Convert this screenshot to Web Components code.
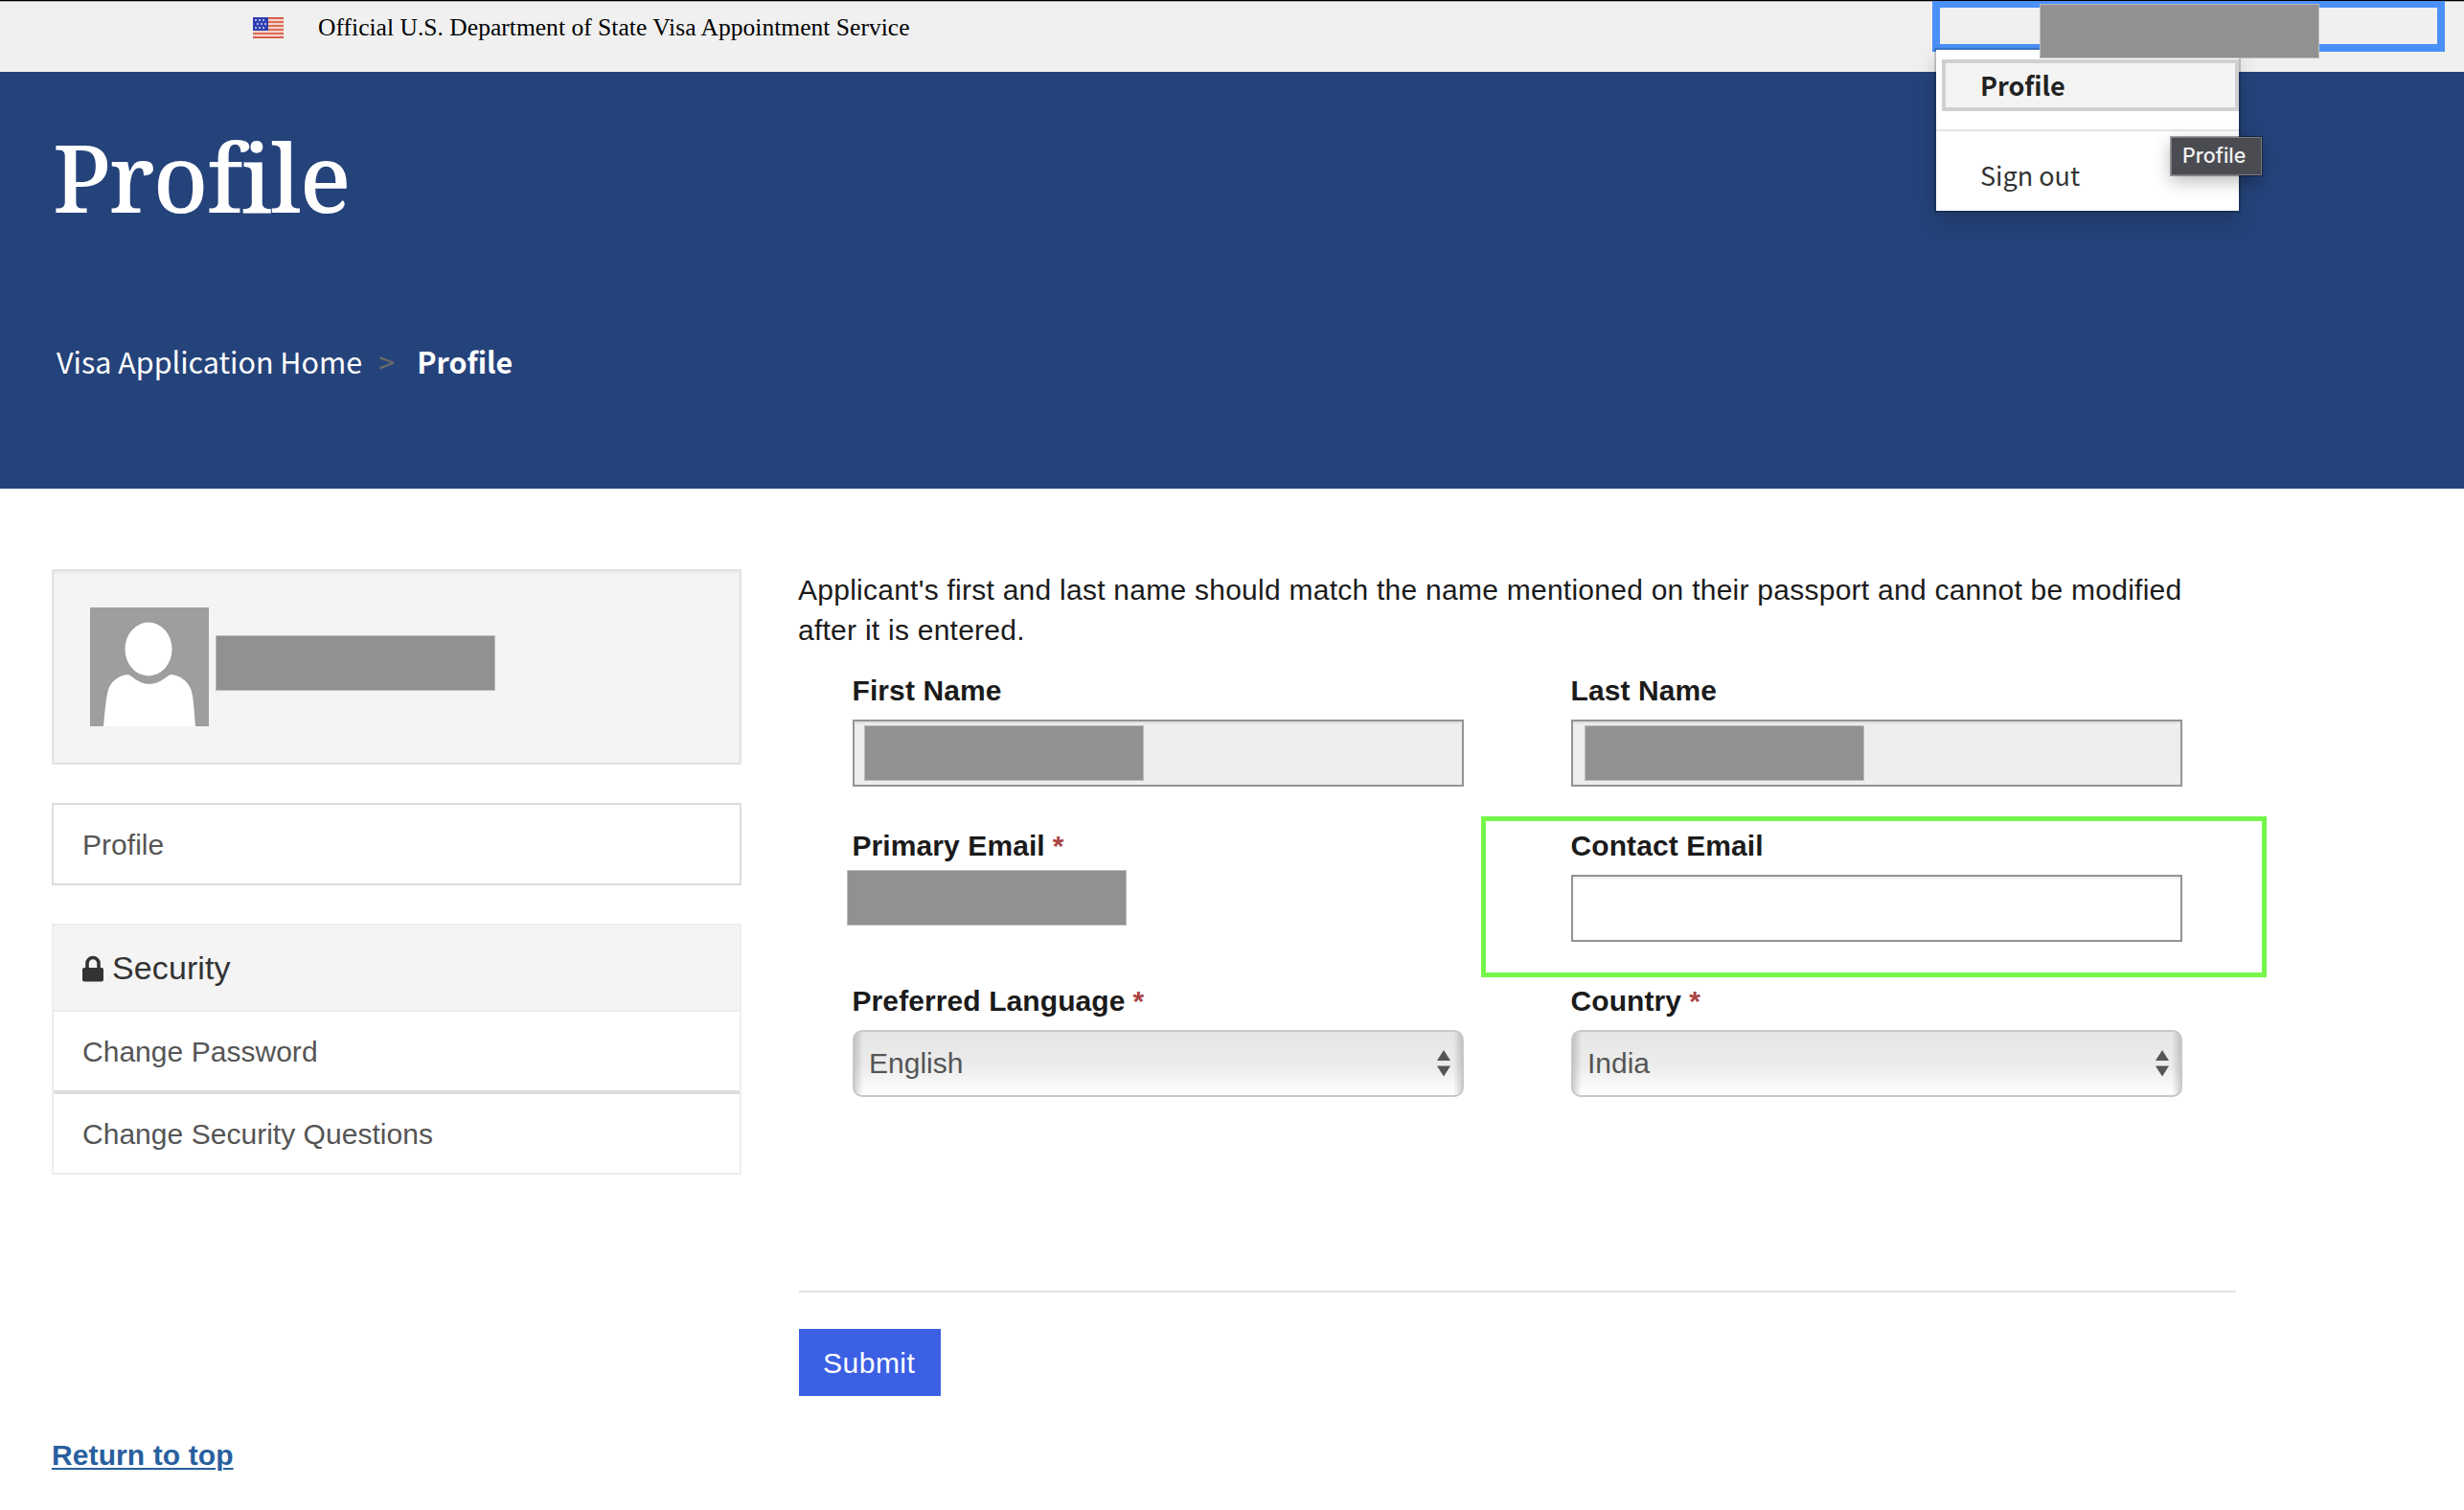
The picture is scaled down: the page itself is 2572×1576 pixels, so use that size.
<!DOCTYPE html>
<html lang="en">
<head>
<meta charset="utf-8">
<title>Profile</title>
<style>
html, body { margin: 0; padding: 0; background: #fff; }
body { width: 2572px; height: 1576px; overflow: hidden; font-family: "Liberation Sans", Arial, sans-serif; font-size: 30px; line-height: 42px; color: #1b1b1b; }
</style>
</head>
<body>
<profile-page></profile-page>
<script>
function define(name, html) {
  const tpl = document.createElement('template');
  tpl.innerHTML = html;
  customElements.define(name, class extends HTMLElement {
    constructor() {
      super();
      this.attachShadow({ mode: 'open' }).appendChild(tpl.content.cloneNode(true));
    }
  });
}

define('redacted-block', `
<style>:host{display:block;box-sizing:border-box;width:291.500px;height:58px;flex:none;background:#919191;border:1px solid #bcbcbc}</style>`);

define('us-flag', `
<style>:host{display:block;width:32px;height:22px;flex:none} svg{display:block}</style>
<svg width="32" height="22" viewBox="0 0 32 22" shape-rendering="crispEdges">
<rect width="32" height="22" fill="#f6d3cc"/>
<g fill="#da6f5a"><rect width="32" height="2" fill="#da6f5a"/><rect width="32" height="1" fill="#cf5238"/><rect y="4" width="32" height="2"/><rect y="8" width="32" height="2"/><rect y="12" width="32" height="2"/><rect y="16" width="32" height="2"/><rect y="20" width="32" height="2"/><rect y="21" width="32" height="1" fill="#cf5238"/></g>
<rect width="16" height="14" fill="#2f3fb0"/>
<g fill="#a9b0e6"><rect x="2" y="2" width="2" height="2"/><rect x="6" y="2" width="2" height="2"/><rect x="10" y="2" width="2" height="2"/>
<rect x="4" y="6" width="2" height="2"/><rect x="8" y="6" width="2" height="2"/><rect x="12" y="6" width="2" height="2"/>
<rect x="2" y="10" width="2" height="2"/><rect x="6" y="10" width="2" height="2"/><rect x="10" y="10" width="2" height="2"/></g>
</svg>`);

define('menu-item', `
<style>
:host{display:block;box-sizing:border-box;height:54px;margin-left:6px;border:4px solid transparent;padding-left:36px;font:27px/46px "Noto Sans CJK JP",sans-serif;color:#333}
:host([active]){background:#f4f4f4;border-color:#d0d0d0;font-weight:700;color:#222}
</style><slot></slot>`);

define('tool-tip', `
<style>:host{display:block;box-sizing:border-box;width:95px;height:40px;background:#4b4c51;border:1px solid #7b7c80;outline:1px solid rgba(0,0,0,.35);box-shadow:0 6px 18px rgba(0,0,0,.28);color:#f2f2f2;font:500 21.5px/37px Inter,sans-serif;padding-left:11px}</style><slot></slot>`);

define('user-menu', `
<style>
:host{display:block;position:relative;box-sizing:border-box;width:535px;height:53px;border:8px solid #4a90f7;border-top-width:7px}
.menu{position:absolute;left:-4px;top:44px;width:316px;height:168px;box-sizing:border-box;padding-top:10px;background:#fff;box-shadow:0 0 0 2px rgba(0,0,0,.18),0 12px 24px rgba(0,0,0,.18)}
hr{margin:19px 0 19px;border:0;height:2px;background:#e5e5e5}
redacted-block{position:absolute;left:104px;top:-4px;height:57px;width:292px}
tool-tip{position:absolute;left:241px;top:135px}
</style>
<div class="menu"><menu-item active>Profile</menu-item><hr><menu-item>Sign out</menu-item></div>
<redacted-block></redacted-block>
<tool-tip>Profile</tool-tip>`);

define('top-bar', `
<style>
:host{display:flex;box-sizing:border-box;height:75px;border-top:1px solid #000;background:#f0f0f0;box-shadow:inset 0 1px #a8a8a8;padding:0 20px 0 264px;align-items:flex-start;position:relative;z-index:2}
us-flag{margin-top:17px}
span{margin:13px auto 0 36px;font:25.5px/30px "Liberation Serif","Times New Roman",serif;color:#000;letter-spacing:.03px}
</style>
<us-flag></us-flag><span>Official U.S. Department of State Visa Appointment Service</span><user-menu></user-menu>`);

define('page-banner', `
<style>
:host{display:block;box-sizing:border-box;height:435px;background:#25437b;color:#fff;padding:39px 0 0 55px}
h1{margin:0;font:500 98.5px/140px "Noto Serif",serif;letter-spacing:-1.65px;font-variant-ligatures:none}
nav{display:flex;margin:101px 0 0 4px;font:30.5px/44px "Noto Sans CJK JP",sans-serif}
i{font-style:normal;color:#6b6b66;font-size:30px;width:40px;padding-left:17px}
b{font-weight:700}
</style>
<h1>Profile</h1>
<nav><span>Visa Application Home</span><i>&gt;</i><b>Profile</b></nav>`);

define('user-card', `
<style>
:host{display:flex;box-sizing:border-box;height:204px;padding:38px;background:#f4f4f4;border:2px solid #e3e3e3;box-shadow:inset 0 2px 3px rgba(0,0,0,.06)}
svg{display:block;flex:none}
redacted-block{margin:29px 0 0 7px;width:292px}
</style>
<svg width="124" height="124" viewBox="0 0 124 124"><rect width="124" height="124" fill="#9e9e9e"/>
<ellipse cx="61" cy="43.500" rx="24.500" ry="28" fill="#fff"/>
<path d="M14 124C15.500 109 16.500 95 19 86C22 76 31 71 39.500 70C44 71 50 80 61.500 80C74 80 80 71 84.500 70C93 71 102 76 105.500 86C108.500 96 108.500 109 110 124Z" fill="#fff"/></svg>
<redacted-block></redacted-block>`);

define('side-link', `
<style>:host{display:block;height:82px;padding:0 30px;line-height:83px;color:#555;letter-spacing:.03px}:host([divided]){border-top:4px solid #ddd}</style><slot></slot>`);

define('side-panel', `
<style>
:host{display:block;border:2px solid #eee;background:#fff}
:host([plain]){border-color:#ddd}
header{display:none}
:host([titled]) header{display:flex;align-items:flex-start;gap:9px;height:88px;background:#f4f4f4;border-bottom:2px solid #eee;padding-left:30px;font-size:34px;line-height:88px;color:#333;letter-spacing:.1px}
svg{margin-top:31px}
</style>
<header><svg width="22" height="28" viewBox="0 0 22 28"><path d="M5 14V8.500a6 6 0 0 1 12 0V14" fill="none" stroke="#333" stroke-width="3.600"/><rect y="13" width="22" height="14.500" rx="2" fill="#333"/></svg><slot name="title"></slot></header><slot></slot>`);

define('side-bar', `
<style>:host{display:flex;flex-direction:column;gap:40px;width:720px;flex:none}</style>
<user-card></user-card>
<side-panel plain><side-link>Profile</side-link></side-panel>
<side-panel titled><span slot="title">Security</span><side-link>Change Password</side-link><side-link divided>Change Security Questions</side-link></side-panel>`);

define('form-field', `
<style>
:host{display:block;position:relative;height:121px}
label{display:block;height:42px;margin:0 0 9px -.5px;font-weight:700;letter-spacing:.09px}
i{display:none;font-style:normal;font-weight:700;color:#a94442;margin-left:8px}
:host([required]) i{display:inline}
</style>
<label><slot name="label"></slot><i>*</i></label><slot></slot>`);

define('text-box', `
<style>
:host{display:flex;box-sizing:border-box;height:70px;border:2px solid #949494;background:#fff;box-shadow:inset 0 2px 2px rgba(0,0,0,.07);padding:4px 10px}
:host([disabled]){background:#eee}
</style><slot></slot>`);

define('select-box', `
<style>
:host{display:flex;box-sizing:border-box;height:70px;border:2px solid #c8c8c8;border-radius:10px;background:linear-gradient(90deg,rgba(0,0,0,.16),transparent 9px,transparent calc(100% - 9px),rgba(0,0,0,.16)),linear-gradient(#e6e6e6,#ececec 55%,#fff);padding:0 12px 0 15px;align-items:center;justify-content:space-between;color:#555;line-height:66px}
</style><slot></slot>
<svg width="14" height="28" viewBox="0 0 14 28"><path d="M7 0L14 11H0ZM0 16.500H14L7 27.500Z" fill="#555"/></svg>`);

define('highlight-frame', `
<style>:host{display:block;position:absolute;left:-94px;top:-10px;box-sizing:border-box;width:820px;height:168px;border:5px solid #74f74a}</style>`);

define('submit-button', `
<style>:host{display:block;box-sizing:border-box;width:148px;height:70px;background:#3b60e4;color:#fff;padding-left:25px;line-height:71px;letter-spacing:.5px}</style><slot></slot>`);

define('profile-form', `
<style>
:host{display:block;width:1500px;margin-top:1px}
p{margin:0 0 0 -1px;letter-spacing:.252px}
.grid{display:grid;grid-template-columns:638px 638px;column-gap:112px;row-gap:41px;margin:21px 0 0 56px}
hr{margin:202px 0 38px;border:0;height:2px;background:#e4e4e4}
.email{margin:-5px 0 0 -6px}
</style>
<p>Applicant's first and last name should match the name mentioned on their passport and cannot be modified<br>after it is entered.</p>
<div class="grid">
<form-field><span slot="label">First Name</span><text-box disabled><redacted-block></redacted-block></text-box></form-field>
<form-field><span slot="label">Last Name</span><text-box disabled style="padding-left:12px"><redacted-block></redacted-block></text-box></form-field>
<form-field required><span slot="label">Primary Email</span><redacted-block class="email"></redacted-block></form-field>
<form-field><span slot="label">Contact Email</span><text-box></text-box><highlight-frame></highlight-frame></form-field>
<form-field required><span slot="label">Preferred Language</span><select-box>English</select-box></form-field>
<form-field required><span slot="label">Country</span><select-box>India</select-box></form-field>
</div>
<hr>
<submit-button>Submit</submit-button>`);

define('profile-page', `
<style>
:host{display:block}
main{display:flex;gap:60px;padding:84px 0 0 54px}
a{display:block;width:max-content;margin:41px 0 0 54px;font-weight:700;color:#285f9f;text-decoration:underline;text-decoration-thickness:2px;text-underline-offset:3px;letter-spacing:.1px}
</style>
<top-bar></top-bar>
<page-banner></page-banner>
<main><side-bar></side-bar><profile-form></profile-form></main>
<a>Return to top</a>`);
</script>
</body>
</html>
